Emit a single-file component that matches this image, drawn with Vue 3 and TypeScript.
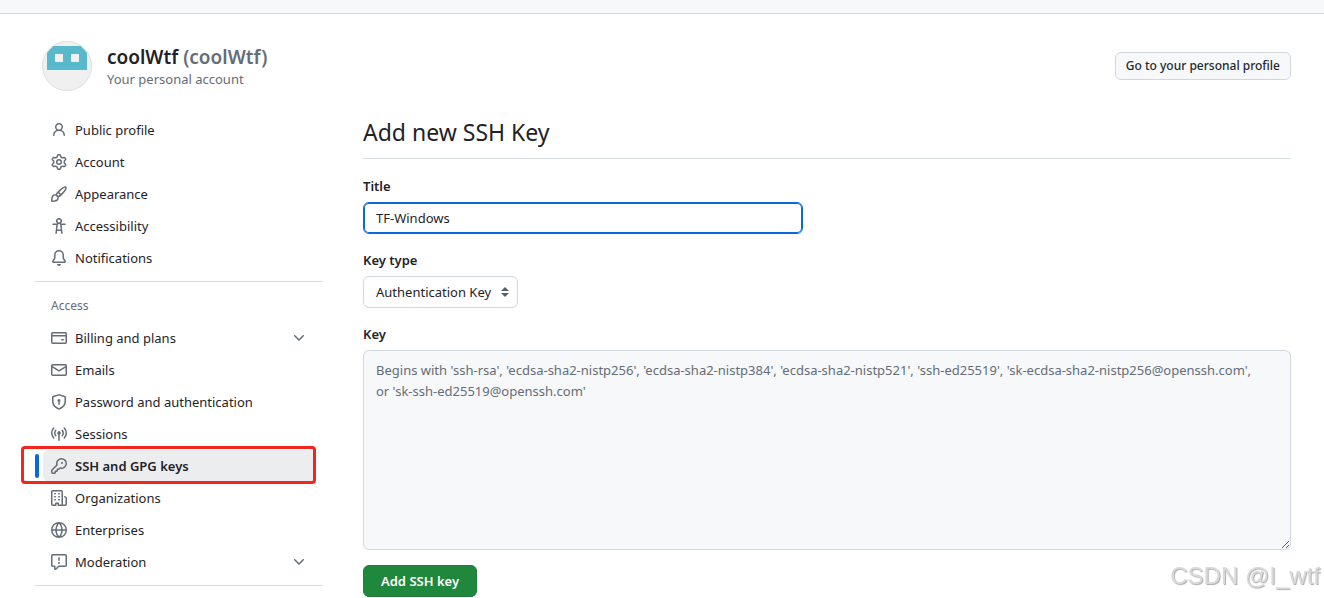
<script setup lang="ts">
import { ref } from 'vue'

interface NavItem {
  label: string
  icon: string
  expandable?: boolean
  current?: boolean
}

const chevron =
  'M12.78 5.22a.749.749 0 0 1 0 1.06l-4.25 4.25a.749.749 0 0 1-1.06 0L3.22 6.28a.749.749 0 1 1 1.06-1.06L8 8.939l3.72-3.719a.749.749 0 0 1 1.06 0Z'

const generalItems: NavItem[] = [
  {
    label: 'Public profile',
    icon: 'M10.561 8.073a6.005 6.005 0 0 1 3.432 5.142.75.75 0 1 1-1.498.07 4.5 4.5 0 0 0-8.99 0 .75.75 0 0 1-1.498-.07 6.004 6.004 0 0 1 3.431-5.142 3.999 3.999 0 1 1 5.123 0ZM10.5 5a2.5 2.5 0 1 0-5 0 2.5 2.5 0 0 0 5 0Z',
  },
  {
    label: 'Account',
    icon: 'M8 0a8.2 8.2 0 0 1 .701.031C9.444.095 9.99.645 10.16 1.29l.288 1.107c.018.066.079.158.212.224.231.114.454.243.668.386.123.082.233.09.299.071l1.103-.303c.644-.176 1.392.021 1.82.63.27.385.506.792.704 1.218.315.675.111 1.422-.364 1.891l-.814.806c-.049.048-.098.147-.088.294.016.257.016.515 0 .772-.01.147.038.246.088.294l.814.806c.475.469.679 1.216.364 1.891a7.977 7.977 0 0 1-.704 1.217c-.428.61-1.176.807-1.82.63l-1.102-.302c-.067-.019-.177-.011-.3.071a5.909 5.909 0 0 1-.668.386c-.133.066-.194.158-.211.224l-.29 1.106c-.168.646-.715 1.196-1.458 1.26a8.006 8.006 0 0 1-1.402 0c-.743-.064-1.289-.614-1.458-1.26l-.289-1.106c-.018-.066-.079-.158-.212-.224a5.738 5.738 0 0 1-.668-.386c-.123-.082-.233-.09-.299-.071l-1.103.303c-.644.176-1.392-.021-1.82-.63a8.12 8.12 0 0 1-.704-1.218c-.315-.675-.111-1.422.363-1.891l.815-.806c.05-.048.098-.147.088-.294a6.214 6.214 0 0 1 0-.772c.01-.147-.038-.246-.088-.294l-.815-.806C.635 6.045.431 5.298.746 4.623a7.92 7.92 0 0 1 .704-1.217c.428-.61 1.176-.807 1.82-.63l1.102.302c.067.019.177.011.3-.071.214-.143.437-.272.668-.386.133-.066.194-.158.211-.224l.29-1.106C6.009.645 6.556.095 7.299.03 7.53.01 7.764 0 8 0Zm-.571 1.525c-.036.003-.108.036-.137.146l-.289 1.105c-.147.561-.549.967-.998 1.189-.173.086-.34.183-.5.29-.417.278-.97.423-1.529.27l-1.103-.303c-.109-.03-.175.016-.195.045-.22.312-.412.644-.573.99-.014.031-.021.11.059.19l.815.806c.411.406.562.957.53 1.456a4.709 4.709 0 0 0 0 .582c.032.499-.119 1.05-.53 1.456l-.815.806c-.081.08-.073.159-.059.19.162.346.353.677.573.989.02.03.085.076.195.046l1.102-.303c.56-.153 1.113-.008 1.53.27.161.107.328.204.501.29.447.222.85.629.997 1.189l.289 1.105c.029.109.101.143.137.146a6.6 6.6 0 0 0 1.142 0c.036-.003.108-.036.137-.146l.289-1.105c.147-.561.549-.967.998-1.189.173-.086.34-.183.5-.29.417-.278.97-.423 1.529-.27l1.103.303c.109.029.175-.016.195-.045.22-.313.411-.644.573-.99.014-.031.021-.11-.059-.19l-.815-.806c-.411-.406-.562-.957-.53-1.456a4.709 4.709 0 0 0 0-.582c-.032-.499.119-1.05.53-1.456l.815-.806c.081-.08.073-.159.059-.19a6.464 6.464 0 0 0-.573-.989c-.02-.03-.085-.076-.195-.046l-1.102.303c-.56.153-1.113.008-1.53-.27a4.44 4.44 0 0 0-.501-.29c-.447-.222-.85-.629-.997-1.189l-.289-1.105c-.029-.11-.101-.143-.137-.146a6.6 6.6 0 0 0-1.142 0ZM11 8a3 3 0 1 1-6 0 3 3 0 0 1 6 0ZM9.5 8a1.5 1.5 0 1 0-3.001.001A1.5 1.5 0 0 0 9.5 8Z',
  },
  {
    label: 'Appearance',
    icon: 'M11.134 1.535c.7-.509 1.416-.942 2.076-1.155.649-.21 1.463-.267 2.069.34.603.601.568 1.411.368 2.07-.202.668-.624 1.39-1.125 2.096-1.011 1.424-2.496 2.987-3.775 4.249-1.098 1.084-2.132 1.839-3.04 2.3a3.744 3.744 0 0 1-1.055 3.217c-.431.431-1.065.691-1.657.861-.614.177-1.294.287-1.914.357A21.151 21.151 0 0 1 .797 16H.743l.007-.75H.749L.742 16a.75.75 0 0 1-.743-.742l.743-.008-.742.007v-.054a21.25 21.25 0 0 1 .13-2.284c.067-.647.187-1.287.358-1.914.17-.591.43-1.226.86-1.657a3.746 3.746 0 0 1 3.227-1.054c.466-.893 1.225-1.907 2.314-2.982 1.271-1.255 2.833-2.75 4.246-3.777ZM1.62 13.089c-.051.464-.086.929-.104 1.395.466-.018.932-.053 1.396-.104a10.511 10.511 0 0 0 1.668-.309c.526-.151.856-.325 1.011-.48a2.25 2.25 0 1 0-3.182-3.182c-.155.155-.329.485-.48 1.01a10.515 10.515 0 0 0-.309 1.67Zm10.396-10.34c-1.224.89-2.605 2.189-3.822 3.384l1.718 1.718c1.21-1.205 2.51-2.597 3.387-3.833.47-.662.78-1.227.912-1.662.134-.444.032-.551.009-.575h-.001V1.78c-.014-.014-.113-.113-.548.027-.432.14-.995.462-1.655.942Zm-4.832 7.266-.001.001a9.859 9.859 0 0 0 1.63-1.142L7.155 7.216a9.7 9.7 0 0 0-1.161 1.607c.482.302.889.71 1.19 1.192Z',
  },
  {
    label: 'Accessibility',
    icon: 'M9.923 5.302c.063.063.122.129.178.198H14A.75.75 0 0 1 14 7h-3.3l.578 5.163.362 2.997a.75.75 0 0 1-1.49.18L9.868 13H6.132l-.282 2.34a.75.75 0 0 1-1.49-.18l.362-2.997L5.3 7H2a.75.75 0 0 1 0-1.5h3.9a2.54 2.54 0 0 1 .176-.198 3 3 0 1 1 3.847 0ZM9.2 7.073h-.001a1.206 1.206 0 0 0-2.398 0L6.305 11.5h3.39ZM9.5 3a1.5 1.5 0 1 0-3.001.001A1.5 1.5 0 0 0 9.5 3Z',
  },
  {
    label: 'Notifications',
    icon: 'M8 16a2 2 0 0 0 1.985-1.75c.017-.137-.097-.25-.235-.25h-3.5c-.138 0-.252.113-.235.25A2 2 0 0 0 8 16ZM3 5a5 5 0 0 1 10 0v2.947c0 .05.015.098.042.139l1.703 2.555A1.519 1.519 0 0 1 13.482 13H2.518a1.516 1.516 0 0 1-1.263-2.36l1.703-2.554A.255.255 0 0 0 3 7.947Zm5-3.5A3.5 3.5 0 0 0 4.5 5v2.947c0 .346-.102.683-.294.97l-1.703 2.556a.017.017 0 0 0-.003.01l.001.006c0 .002.002.004.004.006l.006.004.007.001h10.964l.007-.001.006-.004.004-.006.001-.007a.017.017 0 0 0-.003-.01l-1.703-2.554a1.745 1.745 0 0 1-.294-.97V5A3.5 3.5 0 0 0 8 1.5Z',
  },
]

const accessItems: NavItem[] = [
  {
    label: 'Billing and plans',
    expandable: true,
    icon: 'M10.75 9a.75.75 0 0 0 0 1.5h1.5a.75.75 0 0 0 0-1.5h-1.5ZM0 3.75C0 2.784.784 2 1.75 2h12.5c.966 0 1.75.784 1.75 1.75v8.5A1.75 1.75 0 0 1 14.25 14H1.75A1.75 1.75 0 0 1 0 12.25ZM14.5 6.5h-13v5.75c0 .138.112.25.25.25h12.5a.25.25 0 0 0 .25-.25Zm0-2.75a.25.25 0 0 0-.25-.25H1.75a.25.25 0 0 0-.25.25V5h13Z',
  },
  {
    label: 'Emails',
    icon: 'M1.75 2h12.5c.966 0 1.75.784 1.75 1.75v8.5A1.75 1.75 0 0 1 14.25 14H1.75A1.75 1.75 0 0 1 0 12.25v-8.5C0 2.784.784 2 1.75 2ZM1.5 12.251c0 .138.112.25.25.25h12.5a.25.25 0 0 0 .25-.25V5.809L8.38 9.397a.75.75 0 0 1-.76 0L1.5 5.809v6.442Zm13-8.181v-.32a.25.25 0 0 0-.25-.25H1.75a.25.25 0 0 0-.25.25v.32L8 7.88Z',
  },
  {
    label: 'Password and authentication',
    icon: 'm8.533.133 5.25 1.68A1.75 1.75 0 0 1 15 3.48V7c0 1.566-.32 3.182-1.303 4.682-.983 1.498-2.585 2.813-5.032 3.855a1.697 1.697 0 0 1-1.33 0c-2.447-1.042-4.049-2.357-5.032-3.855C1.32 10.182 1 8.566 1 7V3.48a1.75 1.75 0 0 1 1.217-1.667l5.25-1.68a1.748 1.748 0 0 1 1.066 0Zm-.61 1.429.001.001-5.25 1.68a.251.251 0 0 0-.174.237V7c0 1.36.275 2.666 1.057 3.859.784 1.194 2.121 2.342 4.366 3.298a.196.196 0 0 0 .154 0c2.245-.957 3.582-2.103 4.366-3.297C13.225 9.666 13.5 8.358 13.5 7V3.48a.25.25 0 0 0-.174-.238l-5.25-1.68a.25.25 0 0 0-.153 0ZM9.5 6.5c0 .536-.286 1.032-.75 1.3v2.45a.75.75 0 0 1-1.5 0V7.8A1.5 1.5 0 1 1 9.5 6.5Z',
  },
  {
    label: 'Sessions',
    icon: 'M8.75 8.582v5.668a.75.75 0 0 1-1.5 0V8.582a1.75 1.75 0 1 1 1.5 0Zm3.983-7.125a.75.75 0 0 1 1.06.026A7.976 7.976 0 0 1 16 7c0 2.139-.84 4.083-2.207 5.517a.75.75 0 1 1-1.086-1.034A6.474 6.474 0 0 0 14.5 7a6.474 6.474 0 0 0-1.793-4.483.75.75 0 0 1 .026-1.06Zm-9.466 0c.3.286.312.76.026 1.06A6.474 6.474 0 0 0 1.5 7a6.47 6.47 0 0 0 1.793 4.483.75.75 0 0 1-1.086 1.034A7.973 7.973 0 0 1 0 7c0-2.139.84-4.083 2.207-5.517a.75.75 0 0 1 1.06-.026Zm8.556 2.321A4.988 4.988 0 0 1 13 7a4.988 4.988 0 0 1-1.177 3.222.75.75 0 1 1-1.146-.967A3.487 3.487 0 0 0 11.5 7c0-.86-.309-1.645-.823-2.255a.75.75 0 0 1 1.146-.967Zm-6.492.958A3.48 3.48 0 0 0 4.5 7a3.48 3.48 0 0 0 .823 2.255.75.75 0 0 1-1.146.967A4.981 4.981 0 0 1 3 7a4.982 4.982 0 0 1 1.188-3.236.75.75 0 1 1 1.143.972Z',
  },
  {
    label: 'SSH and GPG keys',
    current: true,
    icon: 'M10.5 0a5.499 5.499 0 1 1-1.288 10.848l-.932.932a.749.749 0 0 1-.53.22H7v.75a.749.749 0 0 1-.22.53l-.5.5a.749.749 0 0 1-.53.22H5v.75a.749.749 0 0 1-.22.53l-.5.5a.749.749 0 0 1-.53.22h-2A1.75 1.75 0 0 1 0 14.25v-2c0-.199.079-.389.22-.53l4.932-4.932A5.5 5.5 0 0 1 10.5 0Zm-4 5.5c-.001.431.069.86.205 1.269a.75.75 0 0 1-.181.768L1.5 12.56v1.69c0 .138.112.25.25.25h1.69l.06-.06v-1.19a.75.75 0 0 1 .75-.75h1.19l.06-.06v-1.19a.75.75 0 0 1 .75-.75h1.19l1.023-1.025a.75.75 0 0 1 .768-.18A4 4 0 1 0 6.5 5.5ZM11 6a1 1 0 1 1 0-2 1 1 0 0 1 0 2Z',
  },
  {
    label: 'Organizations',
    icon: 'M1.75 16A1.75 1.75 0 0 1 0 14.25V1.75C0 .784.784 0 1.75 0h8.5C11.216 0 12 .784 12 1.75v12.5c0 .085-.006.168-.018.25h2.268a.25.25 0 0 0 .25-.25V8.285a.25.25 0 0 0-.111-.208l-1.055-.703a.749.749 0 1 1 .832-1.248l1.055.703c.487.325.779.871.779 1.456v5.965A1.75 1.75 0 0 1 14.25 16h-3.5a.766.766 0 0 1-.197-.026c-.099.017-.2.026-.303.026h-3a.75.75 0 0 1-.75-.75V14h-1v1.25a.75.75 0 0 1-.75.75Zm-.25-1.75c0 .138.112.25.25.25H4v-1.25a.75.75 0 0 1 .75-.75h2.5a.75.75 0 0 1 .75.75v1.25h2.25a.25.25 0 0 0 .25-.25V1.75a.25.25 0 0 0-.25-.25h-8.5a.25.25 0 0 0-.25.25ZM3.75 6h.5a.75.75 0 0 1 0 1.5h-.5a.75.75 0 0 1 0-1.5ZM3 3.75A.75.75 0 0 1 3.75 3h.5a.75.75 0 0 1 0 1.5h-.5A.75.75 0 0 1 3 3.75Zm4 3A.75.75 0 0 1 7.75 6h.5a.75.75 0 0 1 0 1.5h-.5A.75.75 0 0 1 7 6.75ZM7.75 3h.5a.75.75 0 0 1 0 1.5h-.5a.75.75 0 0 1 0-1.5ZM3 9.75A.75.75 0 0 1 3.75 9h.5a.75.75 0 0 1 0 1.5h-.5A.75.75 0 0 1 3 9.75ZM7.75 9h.5a.75.75 0 0 1 0 1.5h-.5a.75.75 0 0 1 0-1.5Z',
  },
  {
    label: 'Enterprises',
    icon: 'M8 0a8 8 0 1 1 0 16A8 8 0 0 1 8 0ZM5.78 8.75a9.64 9.64 0 0 0 1.363 4.177c.255.426.542.832.857 1.215.245-.296.551-.705.857-1.215A9.64 9.64 0 0 0 10.22 8.75Zm4.44-1.5a9.64 9.64 0 0 0-1.363-4.177c-.307-.51-.612-.919-.857-1.215a9.927 9.927 0 0 0-.857 1.215A9.64 9.64 0 0 0 5.78 7.25Zm-5.944 1.5H1.543a6.507 6.507 0 0 0 4.666 5.5c-.123-.181-.24-.365-.352-.552-.715-1.192-1.437-2.874-1.581-4.948Zm-2.733-1.5h2.733c.144-2.074.866-3.756 1.58-4.948.12-.197.237-.381.353-.552a6.507 6.507 0 0 0-4.666 5.5Zm10.181 1.5c-.144 2.074-.866 3.756-1.58 4.948-.12.197-.237.381-.353.552a6.507 6.507 0 0 0 4.666-5.5Zm2.733-1.5a6.507 6.507 0 0 0-4.666-5.5c.123.181.24.365.353.552.714 1.192 1.436 2.874 1.58 4.948Z',
  },
  {
    label: 'Moderation',
    expandable: true,
    icon: 'M0 1.75C0 .784.784 0 1.75 0h12.5C15.216 0 16 .784 16 1.75v9.5A1.75 1.75 0 0 1 14.25 13H8.06l-2.573 2.573A1.458 1.458 0 0 1 3 14.543V13H1.75A1.75 1.75 0 0 1 0 11.25Zm1.75-.25a.25.25 0 0 0-.25.25v9.5c0 .138.112.25.25.25h2a.75.75 0 0 1 .75.75v2.19l2.72-2.72a.749.749 0 0 1 .53-.22h6.5a.25.25 0 0 0 .25-.25v-9.5a.25.25 0 0 0-.25-.25Zm7 2.25v2.5a.75.75 0 0 1-1.5 0v-2.5a.75.75 0 0 1 1.5 0ZM9 9a1 1 0 1 1-2 0 1 1 0 0 1 2 0Z',
  },
]

const groups: { heading?: string; items: NavItem[] }[] = [
  { items: generalItems },
  { heading: 'Access', items: accessItems },
]

const title = ref('TF-Windows')
const keyType = ref('Authentication Key')
const keyText = ref('')
const keyHint =
  "Begins with 'ssh-rsa', 'ecdsa-sha2-nistp256', 'ecdsa-sha2-nistp384', 'ecdsa-sha2-nistp521', 'ssh-ed25519', 'sk-ecdsa-sha2-nistp256@openssh.com', or 'sk-ssh-ed25519@openssh.com'"
</script>

<template>
  <div class="page">
    <div class="topbar"></div>

    <header class="account">
      <svg class="avatar" viewBox="0 0 50 50" aria-hidden="true">
        <defs>
          <clipPath id="avatar-clip"><circle cx="25" cy="25" r="25" /></clipPath>
        </defs>
        <g clip-path="url(#avatar-clip)">
          <rect width="50" height="50" fill="#f0f0f0" />
          <path d="M11 5h28l6 7v17H5V12Z" fill="#57b9cb" />
          <path d="M13 13h8v8h-8ZM29 13h8v8h-8Z" fill="#f0f0f0" />
        </g>
        <circle cx="25" cy="25" r="24.5" fill="none" stroke="#dfe1e3" />
      </svg>
      <div class="identity">
        <h1 class="name">coolWtf <span class="handle">(coolWtf)</span></h1>
        <p class="kind">Your personal account</p>
      </div>
      <button type="button" class="button small">Go to your personal profile</button>
    </header>

    <div class="columns">
      <nav class="sidebar" aria-label="Settings">
        <section v-for="(group, index) in groups" :key="index" class="group">
          <h2 v-if="group.heading" class="group-heading">{{ group.heading }}</h2>
          <ul class="list">
            <li v-for="item in group.items" :key="item.label" class="entry">
              <component
                :is="item.expandable ? 'button' : 'a'"
                :href="item.expandable ? undefined : '#'"
                :type="item.expandable ? 'button' : undefined"
                :aria-current="item.current ? 'page' : undefined"
                class="link"
                :class="{ current: item.current }"
              >
                <svg class="icon" viewBox="0 0 16 16" aria-hidden="true"><path :d="item.icon" /></svg>
                <span class="label">{{ item.label }}</span>
                <svg v-if="item.expandable" class="icon" viewBox="0 0 16 16" aria-hidden="true">
                  <path :d="chevron" />
                </svg>
              </component>
              <span v-if="item.current" class="marker"></span>
              <span v-if="item.current" class="callout"></span>
            </li>
          </ul>
        </section>
      </nav>

      <main class="content">
        <h2 class="title">Add new SSH Key</h2>
        <form class="form" @submit.prevent>
          <div class="field">
            <label for="key-title">Title</label>
            <input id="key-title" v-model="title" class="control text" type="text" />
          </div>
          <div class="field">
            <label for="key-type">Key type</label>
            <div class="select-wrap">
              <select id="key-type" v-model="keyType" class="control select">
                <option>Authentication Key</option>
                <option>Signing Key</option>
              </select>
              <svg class="arrows" viewBox="0 0 8 10" aria-hidden="true">
                <path d="M4 0 8 4H0ZM0 6h8L4 10Z" />
              </svg>
            </div>
          </div>
          <div class="field">
            <label for="key-body">Key</label>
            <textarea id="key-body" v-model="keyText" class="control area" :placeholder="keyHint"></textarea>
          </div>
          <button type="submit" class="button primary">Add SSH key</button>
        </form>
      </main>
    </div>

    <div class="watermark">CSDN @I_wtf</div>
  </div>
</template>

<style>
body {
  background: #ffffff;
}
</style>

<style scoped>
.page,
.page * {
  box-sizing: border-box;
}
.page {
  font-family: 'Noto Sans', 'Open Sans', sans-serif;
  font-size: 13px;
  line-height: 20px;
  color: #1f2328;
}
.topbar {
  height: 14px;
  background: #f6f8fa;
  border-bottom: 1px solid #d0d7de;
}
.account {
  display: flex;
  align-items: center;
  padding: 27px 33px 23px 42px;
}
.avatar {
  width: 50px;
  height: 50px;
  margin-right: 15px;
}
.identity {
  flex: 1;
  padding-top: 2px;
}
.name {
  margin: 0;
  font-size: 19px;
  line-height: 24px;
  font-weight: 600;
}
.handle {
  color: #656d76;
}
.kind {
  margin: 0;
  color: #656d76;
}
.button {
  font: inherit;
  font-weight: 600;
  border: 1px solid #d0d7de;
  border-radius: 6px;
  background: #f6f8fa;
  color: #24292f;
  cursor: pointer;
}
.small {
  height: 28px;
  padding: 0 10px;
  font-size: 12px;
  font-weight: 500;
}
.columns {
  display: grid;
  grid-template-columns: 288px minmax(0, 1fr);
  gap: 40px;
  padding: 0 33px 0 35px;
}
.group {
  padding-bottom: 7px;
  border-bottom: 1px solid #d8dee4;
}
.group-heading {
  margin: 0;
  padding: 14px 16px 6px;
  font-size: 12px;
  line-height: 20px;
  font-weight: 400;
  color: #656d76;
}
.list {
  list-style: none;
  margin: 0;
  padding: 0 8px;
}
.entry {
  position: relative;
}
.link {
  display: flex;
  align-items: center;
  gap: 8px;
  width: 100%;
  height: 32px;
  padding: 0 8px;
  border: 0;
  border-radius: 6px;
  background: none;
  color: inherit;
  font: inherit;
  text-align: left;
  text-decoration: none;
  cursor: pointer;
}
.label {
  flex: 1;
}
.current {
  background: #ecedef;
  font-weight: 600;
}
.icon {
  flex: none;
  width: 16px;
  height: 16px;
  fill: #656d76;
}
.marker {
  position: absolute;
  left: -8px;
  top: 4px;
  width: 4px;
  height: 24px;
  border-radius: 3px;
  background: #0969da;
}
.callout {
  position: absolute;
  left: -22px;
  right: -1px;
  top: -4px;
  height: 38px;
  border: 3px solid #f4251d;
  border-radius: 4px;
  pointer-events: none;
}
.title {
  margin: 0 0 17px;
  padding-bottom: 8px;
  border-bottom: 1px solid #d8dee4;
  font-size: 23px;
  line-height: 36px;
  font-weight: 400;
}
.form {
  display: flex;
  flex-direction: column;
  align-items: flex-start;
}
.field {
  display: flex;
  flex-direction: column;
  align-items: flex-start;
  gap: 6px;
  width: 100%;
  margin-bottom: 16px;
}
.field:last-of-type {
  margin-bottom: 15px;
}
.field label {
  font-weight: 600;
}
.control {
  height: 32px;
  margin: 0;
  padding: 0 12px;
  border: 1px solid #d0d7de;
  border-radius: 6px;
  background: #ffffff;
  color: #1f2328;
  font: inherit;
  outline: none;
}
.text {
  width: 100%;
  max-width: 440px;
  border-color: #0969da;
  box-shadow: inset 0 0 0 1px #0969da;
}
.select-wrap {
  position: relative;
}
.select {
  padding-right: 25px;
  appearance: none;
}
.arrows {
  position: absolute;
  right: 9px;
  top: 11px;
  width: 8px;
  height: 10px;
  fill: #57606a;
  pointer-events: none;
}
.area {
  width: 100%;
  height: 200px;
  padding: 9px 28px 9px 12px;
  line-height: 21px;
  background: #f6f8fa;
  resize: vertical;
}
.area::placeholder {
  color: #656d76;
}
.primary {
  height: 32px;
  padding: 0 17px;
  border-color: #1f7f39;
  background: #1f883d;
  color: #ffffff;
}
.watermark {
  position: fixed;
  right: 4px;
  bottom: 6px;
  font-family: 'Liberation Sans', Arial, sans-serif;
  font-size: 24px;
  line-height: 32px;
  color: #dadada;
  text-shadow: 1px 1px 1px #acacac;
  pointer-events: none;
}
</style>
